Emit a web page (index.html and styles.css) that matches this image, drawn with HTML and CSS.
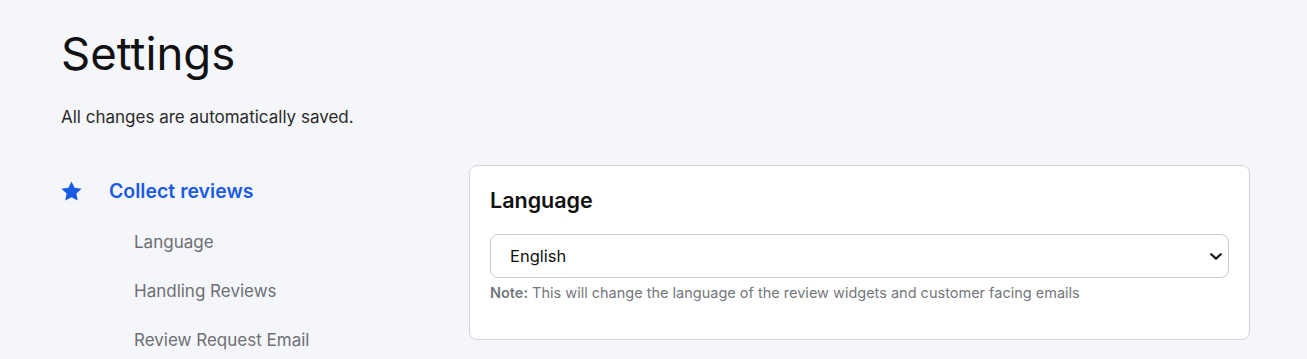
FILE: index.html
```html
<!DOCTYPE html>
<html lang="en">
<head>
    <meta charset="UTF-8">
    <meta name="viewport" content="width=device-width, initial-scale=1.0">
    <title>Settings</title>
    <link rel="stylesheet" href="styles.css">
</head>
<body>
    <div class="page">
        <h1>Settings</h1>
        <p class="saved">All changes are automatically saved.</p>

        <div class="layout">
            <nav class="side-nav">
                <a class="nav-group" href="#">
                    <svg class="star" viewBox="0 0 24 24" width="23" height="23" aria-hidden="true">
                        <path d="M12 1.5l3.2 6.7 7.3.9-5.4 5.1 1.4 7.3L12 18l-6.5 3.5 1.4-7.3-5.4-5.1 7.3-.9z" fill="currentColor"/>
                    </svg>
                    <span>Collect reviews</span>
                </a>
                <a class="nav-item" href="#">Language</a>
                <a class="nav-item" href="#">Handling Reviews</a>
                <a class="nav-item" href="#">Review Request Email</a>
            </nav>

            <section class="card">
                <h2>Language</h2>
                <div class="select-wrap">
                    <select class="select">
                        <option>English</option>
                        <option>French</option>
                        <option>German</option>
                        <option>Spanish</option>
                    </select>
                    <svg class="chevron" viewBox="0 0 12 7" width="12" height="7" aria-hidden="true">
                        <path d="M1.2 1.2L6 5.6l4.8-4.4" fill="none" stroke="currentColor" stroke-width="2.2" stroke-linecap="round" stroke-linejoin="round"/>
                    </svg>
                </div>
                <p class="note"><b>Note:</b> This will change the language of the review widgets and customer facing emails</p>
            </section>
        </div>
    </div>
</body>
</html>
```

FILE: styles.css
```css
body {
    margin: 0;
    background-color: #f5f6fa;
    font-family: Inter, "Noto Sans", sans-serif;
    color: #111;
}
.page {
    padding: 23px 57px 0 61px;
}
h1 {
    margin: 0;
    font-size: 45.5px;
    font-weight: 400;
    line-height: 62px;
}
.saved {
    margin: 21px 0 0;
    font-size: 17px;
    line-height: 22px;
    color: #2a2a2a;
}
.layout {
    display: grid;
    grid-template-columns: 408px 1fr;
    align-items: start;
    margin-top: 37px;
}
.side-nav {
    display: flex;
    flex-direction: column;
    padding-top: 14px;
}
.nav-group {
    display: flex;
    align-items: center;
    gap: 26px;
    color: #1a5be6;
    text-decoration: none;
    font-size: 19.5px;
    font-weight: 600;
    line-height: 24px;
}
.star {
    flex: none;
    margin-left: -1px;
}
.nav-item {
    margin-top: 25px;
    padding-left: 73px;
    color: #6d6f74;
    text-decoration: none;
    font-size: 17px;
    line-height: 24px;
}
.nav-group + .nav-item {
    margin-top: 27px;
}
.card {
    background-color: #fff;
    border: 1px solid #d3d4d9;
    border-radius: 8px;
    padding: 20px 20px 38px;
}
h2 {
    margin: 0;
    font-size: 21.5px;
    font-weight: 600;
    line-height: 28px;
}
.select-wrap {
    position: relative;
    margin-top: 20px;
}
.select {
    display: block;
    width: 100%;
    height: 44px;
    padding: 0 36px 0 19px;
    border: 1px solid #c9cad0;
    border-radius: 8px;
    background-color: #fff;
    font-family: inherit;
    font-size: 16.5px;
    color: #111;
    appearance: none;
    -webkit-appearance: none;
}
.chevron {
    position: absolute;
    right: 7px;
    top: 19px;
    color: #1b1b1b;
    pointer-events: none;
}
.note {
    margin: 7px 0 0;
    font-size: 14.5px;
    line-height: 16px;
    color: #74777c;
}
.note b {
    font-weight: 600;
}
```
